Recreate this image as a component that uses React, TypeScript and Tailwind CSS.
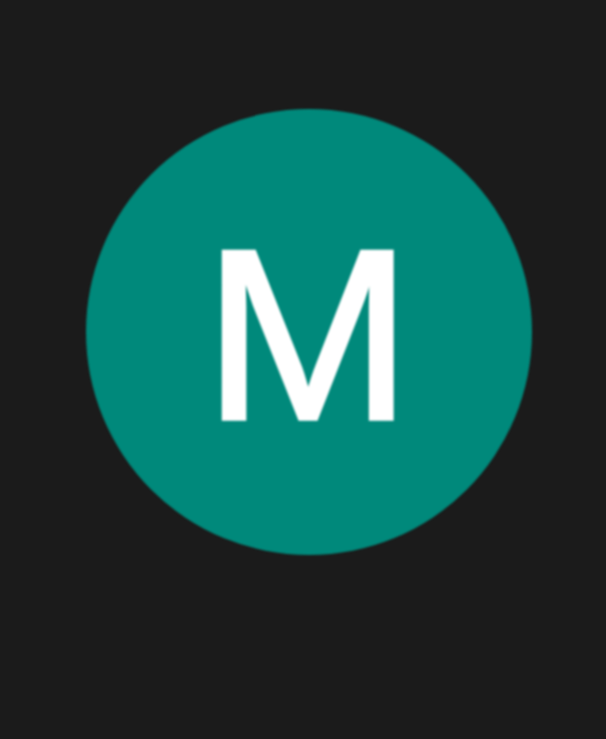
export default function App() {
  return (
    <div className="w-[606px] h-[739px] bg-[#1b1b1b] overflow-hidden">
      <div className="pt-[109px] pl-[86px]">
        <div className="w-[446px] h-[446px] rounded-full bg-[#00897b] flex items-center justify-center pt-[6px] pr-[2px] blur-[1px]">
          <span className="inline-block scale-x-[1.03] text-white text-[244px] leading-none font-['Liberation_Sans',sans-serif] [-webkit-text-stroke:3.5px_white]">M</span>
        </div>
      </div>
    </div>
  );
}
